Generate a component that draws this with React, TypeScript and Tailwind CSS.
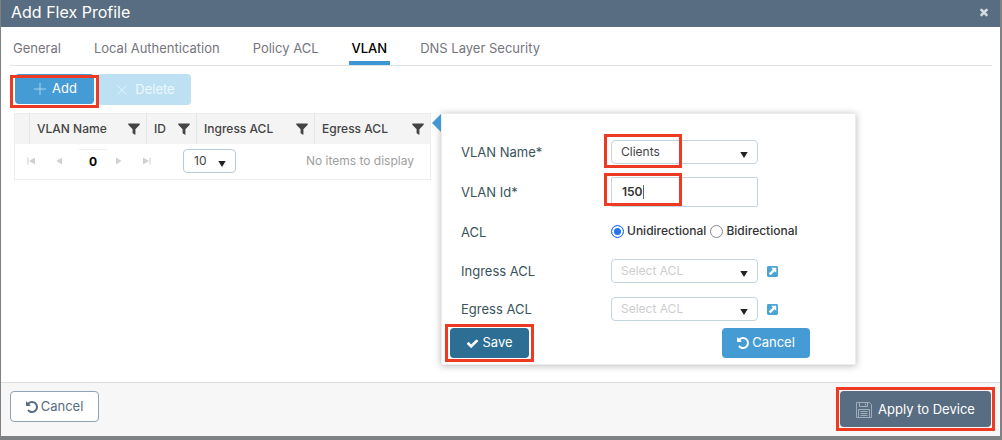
import type { ReactNode } from "react";

type IconProps = { className?: string };

const Undo = ({ className }: IconProps) => (
  <svg viewBox="0 128 1536 1536" className={className} fill="currentColor" aria-hidden="true">
    <path d="M1536 896q0 156-61 298t-164 245-245 164-298 61q-172 0-327-72.5t-264-204.5q-7-10-6.5-22.5t8.5-20.5l137-138q10-9 25-9 16 2 23 12 73 95 179 147t225 52q104 0 198.5-40.5t163.5-109.5 109.5-163.5 40.5-198.5-40.5-198.5-109.5-163.5-163.5-109.5-198.5-40.5q-98 0-188 35.5t-160 101.5l137 138q31 30 14 69-17 40-59 40h-448q-26 0-45-19t-19-45v-448q0-42 40-59 39-17 69 14l130 129q107-101 244.5-156.5t284.5-55.5q156 0 298 61t245 164 164 245 61 298z" />
  </svg>
);

const Check = ({ className }: IconProps) => (
  <svg viewBox="0 0 1792 1792" className={className} fill="currentColor" aria-hidden="true">
    <path d="M1671 566q0 40-28 68l-724 724-136 136q-28 28-68 28t-68-28l-136-136-362-362q-28-28-28-68t28-68l136-136q28-28 68-28t68 28l294 295 656-657q28-28 68-28t68 28l136 136q28 28 28 68z" />
  </svg>
);

const Times = ({ className }: IconProps) => (
  <svg viewBox="0 0 1792 1792" className={className} fill="currentColor" aria-hidden="true">
    <path d="M1490 1322q0 40-28 68l-136 136q-28 28-68 28t-68-28l-294-294-294 294q-28 28-68 28t-68-28l-136-136q-28-28-28-68t28-68l294-294-294-294q-28-28-28-68t28-68l136-136q28-28 68-28t68 28l294 294 294-294q28-28 68-28t68 28l136 136q28 28 28 68t-28 68l-294 294 294 294q28 28 28 68z" />
  </svg>
);

const Funnel = () => (
  <svg viewBox="0 0 12 12" className="size-3 shrink-0 text-[#444]" fill="currentColor" aria-hidden="true">
    <path d="M0.3 0.5h11.4v1.3L7.4 6.2V12L4.6 10.2V6.2L0.3 1.8z" />
  </svg>
);

const Caret = () => (
  <svg viewBox="0 0 8 6" className="h-1.5 w-2" fill="#222" aria-hidden="true">
    <path d="M0.3 0h7.4L4 6z" />
  </svg>
);

const LinkSquare = () => (
  <svg viewBox="0 0 10 10" className="size-[11px]" aria-hidden="true">
    <rect width="10" height="10" rx="1.3" fill="#4aa5d4" />
    <path d="M3.8 1.6h4.6v4.6L6.9 4.8 3.3 8.5 1.6 6.8 5.3 3.2z" fill="#fff" />
  </svg>
);

const Floppy = () => (
  <svg viewBox="0 0 16 16" className="size-4" fill="none" stroke="#a0aebb" aria-hidden="true">
    <path d="M0.5 0.5h12.8l2.2 2.2v12.8h-15z" />
    <path d="M3.5 0.5v4h8v-4M9.5 1.5v2M2.5 15.5V7.5h11v8M4.5 9.5h7M4.5 11.5h7M4.5 13.5h7" />
  </svg>
);

const Highlight = ({ className, children }: { className: string; children: ReactNode }) => (
  <div className="relative">
    {children}
    <span className={`pointer-events-none absolute border-3 border-[#ee3a22] ${className}`} />
  </div>
);

const tabs = ["General", "Local Authentication", "Policy ACL", "VLAN", "DNS Layer Security"];

const columns = [
  { name: "VLAN Name", width: "w-[117px]" },
  { name: "ID", width: "w-[50px]" },
  { name: "Ingress ACL", width: "w-[118px]" },
  { name: "Egress ACL", width: "w-[116px]" },
];

const PagerButton = ({ label, path }: { label: string; path: string }) => (
  <button aria-label={label} className="flex size-4 items-center justify-center text-[#d0d0d0]">
    <svg viewBox="0 0 8 8" className="size-2" fill="currentColor" aria-hidden="true">
      <path d={path} />
    </svg>
  </button>
);

function Select({ id, value, placeholder }: { id: string; value: string; placeholder?: boolean }) {
  return (
    <div className="relative">
      <select
        id={id}
        className={`block h-6 w-full appearance-none rounded border border-[#c3d5df] bg-white pl-[9px] text-xs ${
          placeholder ? "text-[#cdcdcd]" : "text-[#444]"
        }`}
      >
        <option>{value}</option>
      </select>
      <span className="pointer-events-none absolute right-2.5 bottom-1.5">
        <Caret />
      </span>
    </div>
  );
}

function VlanTable() {
  return (
    <table className="table-fixed border border-[#ededed]">
      <thead>
        <tr className="h-[30px] bg-[#f4f4f4] text-left">
          <th className="w-[15px]" aria-label="Select" />
          {columns.map((c) => (
            <th key={c.name} className={`${c.width} border-l border-[#e6e6e6] p-0 pr-1.5 pl-[7px] text-xs font-medium text-[#444]`}>
              <div className="flex items-center justify-between">
                {c.name}
                <Funnel />
              </div>
            </th>
          ))}
        </tr>
      </thead>
      <tbody>
        <tr>
          <td colSpan={5} className="p-0">
            <div className="flex h-[35px] items-center pr-4 pl-2 text-xs">
              <div className="flex items-center">
                <PagerButton label="First page" path="M0.5 0.5h1v7h-1zM8 0.5v7L2 4z" />
                <span className="w-3" />
                <PagerButton label="Previous page" path="M7 0.5v7L1.5 4z" />
                <span className="mr-1 ml-3 w-7 border-t border-[#eee] py-1 text-center font-bold text-black">0</span>
                <PagerButton label="Next page" path="M1 0.5v7L6.5 4z" />
                <span className="w-3" />
                <PagerButton label="Last page" path="M0 0.5v7L6 4zM6.5 0.5h1v7h-1z" />
              </div>
              <div className="relative ml-7">
                <select
                  aria-label="Items per page"
                  className="block h-6 w-[53px] appearance-none rounded border border-[#b7ccd8] bg-white pl-2.5 text-xs text-[#444]"
                >
                  <option>10</option>
                </select>
                <span className="pointer-events-none absolute right-2.5 bottom-1.5">
                  <Caret />
                </span>
              </div>
              <span className="ml-auto text-[#a0a0a0]">No items to display</span>
            </div>
          </td>
        </tr>
      </tbody>
    </table>
  );
}

function VlanForm() {
  const label = "text-[13px] leading-5 text-[#39535a]";
  return (
    <form className="relative ml-2.5 w-[415px] border border-[#ececec] bg-white shadow-[0_1px_7px_rgba(0,0,0,0.28)]">
      <svg viewBox="0 0 9 18" className="absolute top-0 -left-2.5 h-[18px] w-[9px]" fill="#4198d4" aria-hidden="true">
        <path d="M9 0v18L0 9z" />
      </svg>
      <div className="grid grid-cols-[140px_147px_auto] items-center gap-x-2.5 pt-[18px] pl-[19px]">
        <label htmlFor="vlan-name" className={`${label} col-start-1`}>VLAN Name*</label>
        <div className="flex h-10 flex-col justify-center">
          <Highlight className="-top-1.5 -left-[7px] h-[34px] w-[78px]">
            <Select id="vlan-name" value="Clients" />
          </Highlight>
        </div>
        <label htmlFor="vlan-id" className={`${label} col-start-1`}>VLAN Id*</label>
        <div className="flex h-10 flex-col justify-center">
          <Highlight className="-top-1 -left-[7px] h-[33px] w-[78px]">
            <input
              id="vlan-id"
              defaultValue="150"
              className="block h-[30px] w-full rounded-xs border border-[#c3d5df] bg-white px-2.5 pb-0.5 text-xs font-semibold text-[#333]"
            />
            <span className="pointer-events-none absolute top-2 left-8 h-3.5 w-px bg-[#666]" />
          </Highlight>
        </div>
        <span className={`${label} col-start-1`}>ACL</span>
        <div className="col-span-2 flex h-10 items-center pb-0.5 text-xs font-medium text-[#333]">
          <label className="flex items-center gap-[3px]">
            <input type="radio" name="direction" defaultChecked className="size-[13px] appearance-none rounded-full border border-[#2474ee] bg-[#2474ee] shadow-[inset_0_0_0_2px_#fff]" />
            Unidirectional
          </label>
          <label className="ml-1 flex items-center gap-[3px]">
            <input type="radio" name="direction" className="size-[13px] appearance-none rounded-full border border-[#85858f] bg-white" />
            Bidirectional
          </label>
        </div>
        {["Ingress ACL", "Egress ACL"].map((name) => (
          <div key={name} className="col-span-3 grid h-[38px] grid-cols-subgrid items-center">
            <label htmlFor={name} className={label}>{name}</label>
            <Select id={name} value="Select ACL" placeholder />
            <a href="#acl" aria-label={`Open ${name}`} className="-ml-px justify-self-start">
              <LinkSquare />
            </a>
          </div>
        ))}
      </div>
      <div className="flex justify-between pr-[45px] pb-1.5 pl-2 text-[13px]">
        <Highlight className="-inset-x-[5px] -inset-y-1">
          <button type="button" className="flex h-[30px] w-[79px] items-center justify-center gap-[3px] rounded bg-[#2d6e95] text-white">
            <Check className="size-[13px]" />
            Save
          </button>
        </Highlight>
        <button type="button" className="flex h-[30px] w-[88px] items-center justify-center gap-[3px] rounded bg-[#459cd4] text-white">
          <Undo className="size-3" />
          Cancel
        </button>
      </div>
    </form>
  );
}

export default function App() {
  return (
    <div className="flex min-h-screen flex-col border-r-2 border-b-4 border-l border-[#7e8283] bg-white font-['Inter','Liberation_Sans',sans-serif]">
      <header className="flex h-[27px] items-center justify-between bg-[#586d81] pr-2.5 pb-1 pl-2.5">
        <h1 className="text-base leading-5 text-white">Add Flex Profile</h1>
        <button aria-label="Close" className="text-[#d3dae0]">
          <Times className="size-3" />
        </button>
      </header>
      <main className="flex-1 pr-2 pl-[9px]">
        <nav className="flex h-[39px] items-end gap-[27px] border-b border-[#dfe1e3] text-[13px]">
          {tabs.map((t) => (
            <a
              key={t}
              href="#tab"
              className={`border-b-4 px-[3px] pb-[3px] leading-5 ${
                t === "VLAN" ? "border-[#3b97d3] font-medium text-black" : "border-transparent text-[#75757d]"
              }`}
            >
              {t}
            </a>
          ))}
        </nav>
        <div className="flex pt-2 pl-[5px] text-[13px]">
          <Highlight className="top-px -right-[5px] -bottom-[3px] -left-[5px]">
            <button className="flex h-[30px] w-[79px] items-center justify-center gap-1.5 rounded bg-[#459cd4] pl-0.5 text-white">
              <svg viewBox="0 0 12 12" className="size-3" stroke="#a9d3ee" aria-hidden="true">
                <path d="M6 0v12M0 6h12" />
              </svg>
              Add
            </button>
          </Highlight>
          <button disabled className="ml-[3px] flex h-[31px] w-[94px] items-center justify-center gap-2 rounded bg-[#bde1f3] pl-1 text-[#edf8fd]">
            <svg viewBox="0 0 10 10" className="size-2.5" stroke="#dff1fa" aria-hidden="true">
              <path d="M0.5 0.5l9 9M9.5 0.5l-9 9" />
            </svg>
            Delete
          </button>
        </div>
        <div className="flex items-start pt-2 pb-4 pl-1">
          <VlanTable />
          <VlanForm />
        </div>
      </main>
      <footer className="flex h-[54px] items-start justify-between border-t border-[#dcdfe1] bg-[#f7f7f7] pr-[9px] pl-[9px]">
        <button className="mt-2 flex h-[31px] w-[89px] items-center justify-center gap-[3px] rounded border border-[#8fa3b4] bg-white text-[13px] text-[#586d81]">
          <Undo className="size-3" />
          Cancel
        </button>
        <div className="mt-2">
          <Highlight className="-inset-x-1 -inset-y-1">
            <button className="flex h-9 w-[151px] items-center justify-center gap-1.5 rounded bg-[#586d81] pt-0.5 text-[13px] text-white">
              <Floppy />
              Apply to Device
            </button>
          </Highlight>
        </div>
      </footer>
    </div>
  );
}
